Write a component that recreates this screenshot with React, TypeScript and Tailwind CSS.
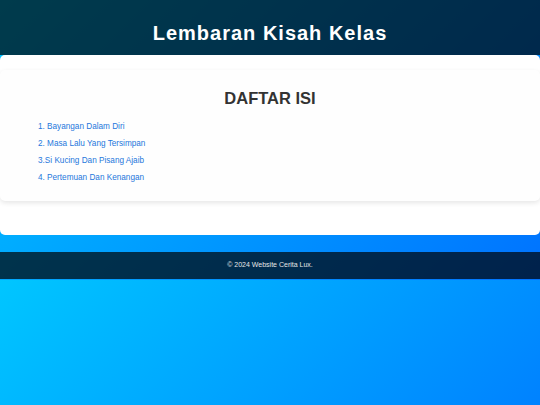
const chapters = [
  '1. Bayangan Dalam Diri',
  '2. Masa Lalu Yang Tersimpan',
  '3.Si Kucing Dan Pisang Ajaib',
  '4. Pertemuan Dan Kenangan',
]

export default function App() {
  return (
    <div className="min-h-screen bg-[linear-gradient(135deg,#00c6ff,#0072ff)] bg-[length:100%_280px] bg-repeat font-['Liberation_Sans',Arial,sans-serif]">
      <header className="flex h-[55px] justify-center bg-black/70 pt-[21px]">
        <h1 className="text-[20px] font-bold leading-[24px] tracking-[1px] text-white">Lembaran Kisah Kelas</h1>
      </header>

      <main className="rounded-[5px] bg-white pb-[34px] pt-[15px]">
        <section className="rounded-[5px] bg-[#fefefe] px-[38px] pb-[15px] pt-[18px] shadow-[0_2px_5px_rgba(0,0,0,0.1)]">
          <h2 className="text-center text-[16.5px] font-bold leading-[20px] text-[#333]">DAFTAR ISI</h2>
          <ul className="mt-[10px]">
            {chapters.map((c) => (
              <li key={c} className="text-[8.2px] leading-[17px] text-[#2577dc]">
                <a href="#">{c}</a>
              </li>
            ))}
          </ul>
        </section>
      </main>

      <footer className="mt-[17px] flex h-[27px] items-center justify-center bg-black/70">
        <p className="text-[7px] text-[#e6e6e6]">© 2024 Website Cerita Lux.</p>
      </footer>
    </div>
  )
}
